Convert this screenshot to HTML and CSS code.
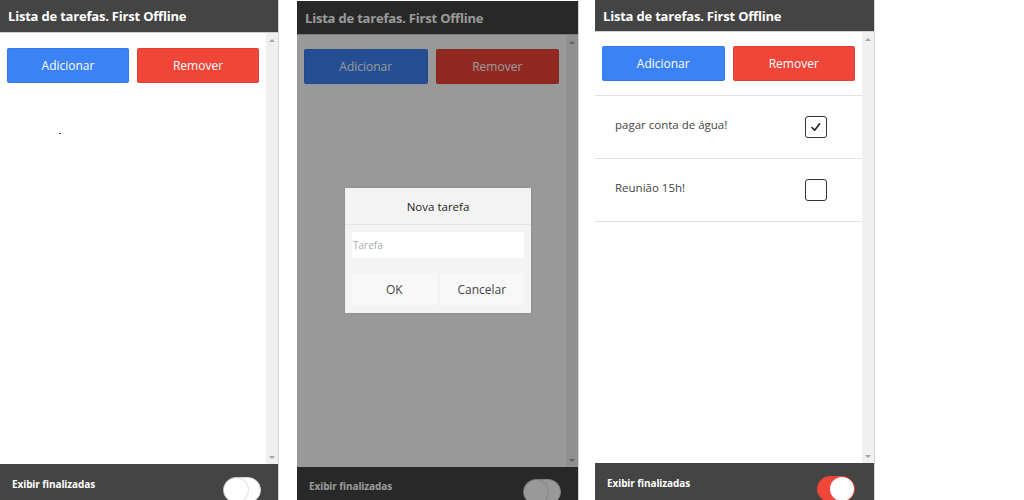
FILE: index.html
```html
<!DOCTYPE html>
<html lang="pt">
<head>
<meta charset="utf-8">
<title>Lista de tarefas</title>
<link rel="stylesheet" href="styles.css">
</head>
<body>
<div class="screens">

  <section class="phone p1">
    <header class="bar">Lista de tarefas. First Offline</header>
    <div class="main">
      <div class="content">
        <div class="actions">
          <button class="btn btn-add">Adicionar</button>
          <button class="btn btn-remove">Remover</button>
        </div>
        <div class="stray"></div>
      </div>
      <div class="scroll"><span class="arr up"></span><span class="arr down"></span></div>
    </div>
    <footer class="foot">
      <span class="foot-label">Exibir finalizadas</span>
      <span class="toggle"><span class="knob"></span></span>
    </footer>
  </section>

  <section class="phone p2">
    <header class="bar">Lista de tarefas. First Offline</header>
    <div class="main">
      <div class="content">
        <div class="actions">
          <button class="btn btn-add">Adicionar</button>
          <button class="btn btn-remove">Remover</button>
        </div>
      </div>
      <div class="scroll"><span class="arr up"></span><span class="arr down"></span></div>
    </div>
    <footer class="foot">
      <span class="foot-label">Exibir finalizadas</span>
      <span class="toggle"><span class="knob"></span></span>
    </footer>
    <div class="overlay"></div>
    <div class="dialog">
      <div class="dialog-title">Nova tarefa</div>
      <div class="dialog-body">
        <input class="dialog-input" type="text" placeholder="Tarefa">
        <div class="dialog-actions">
          <button class="dbtn">OK</button>
          <button class="dbtn">Cancelar</button>
        </div>
      </div>
    </div>
  </section>

  <section class="phone p3">
    <header class="bar">Lista de tarefas. First Offline</header>
    <div class="main">
      <div class="content">
        <div class="actions">
          <button class="btn btn-add">Adicionar</button>
          <button class="btn btn-remove">Remover</button>
        </div>
        <ul class="tasks">
          <li class="task">
            <span class="task-text">pagar conta de água!</span>
            <span class="check">
              <svg viewBox="0 0 22 22" width="20" height="20"><polyline points="6.5,11.5 9.5,14.5 15,7.5" fill="none" stroke="#222" stroke-width="1.8" stroke-linecap="round" stroke-linejoin="round"/></svg>
            </span>
          </li>
          <li class="task">
            <span class="task-text">Reunião 15h!</span>
            <span class="check"></span>
          </li>
        </ul>
      </div>
      <div class="scroll"><span class="arr up"></span><span class="arr down"></span></div>
    </div>
    <footer class="foot">
      <span class="foot-label">Exibir finalizadas</span>
      <span class="toggle on"><span class="knob"></span></span>
    </footer>
  </section>

</div>
</body>
</html>
```

FILE: styles.css
```css
* { box-sizing: border-box; }

body {
  margin: 0;
  background: #fff;
  font-family: "Open Sans", "Noto Sans", sans-serif;
}

.screens {
  display: flex;
  align-items: flex-start;
  height: 500px;
  overflow: hidden;
}

.phone {
  position: relative;
  flex: none;
  display: flex;
  flex-direction: column;
  height: 500px;
  border-right: 1px solid #d6d6d6;
  overflow: hidden;
}

.p1 { width: 279px; }
.p2 { width: 282px; margin-left: 18px; margin-top: 1px; }
.p3 { width: 280px; margin-left: 16px; }

.bar {
  flex: none;
  height: 33px;
  background: #444;
  border-bottom: 1px solid #d0d0d0;
  color: #fff;
  font-weight: 700;
  font-size: 13px;
  letter-spacing: -0.2px;
  padding-left: 8px;
  display: flex;
  align-items: center;
}
.p2 .bar { height: 34px; }
.p3 .bar { height: 32px; }

.main {
  flex: 1;
  display: flex;
  min-height: 0;
}

.content {
  flex: 1;
  min-width: 0;
}

.actions {
  display: flex;
  gap: 8px;
  padding: 15px 7px 0;
}
.p2 .actions, .p3 .actions { padding-top: 14px; }

.btn {
  flex: 1;
  height: 35px;
  border: 1px solid rgba(0,0,0,0.06);
  border-radius: 2px;
  color: #fff;
  font-family: inherit;
  font-size: 12px;
  padding: 0;
}
.btn-add { background: #3b82f6; }
.btn-remove { background: #f04539; }

.stray {
  width: 2px;
  height: 1px;
  margin: 50px 0 0 59px;
  background: #444;
}

.scroll {
  flex: none;
  width: 12px;
  background: #f0f0f0;
  display: flex;
  flex-direction: column;
  justify-content: space-between;
  align-items: center;
  padding: 6px 0 5px;
}
.arr {
  width: 0;
  height: 0;
  border-left: 3px solid transparent;
  border-right: 3px solid transparent;
}
.arr.up { border-bottom: 3px solid #a3a3a3; }
.arr.down { border-top: 3px solid #a3a3a3; }

.foot {
  flex: none;
  height: 36px;
  background: #444;
  display: flex;
  justify-content: space-between;
  align-items: flex-start;
  padding: 13px 17px 0 12px;
}
.p2 .foot { height: 34px; padding-top: 12px; }
.p3 .foot { height: 37px; padding-right: 19px; }

.foot-label {
  color: #fff;
  font-weight: 700;
  font-size: 10px;
  line-height: 14px;
  letter-spacing: -0.1px;
}

.toggle {
  position: relative;
  width: 38px;
  height: 26px;
  border-radius: 13px;
  background: #fff;
  border: 1px solid #d8d8d8;
}
.knob {
  position: absolute;
  top: 0;
  left: 0;
  width: 24px;
  height: 24px;
  border-radius: 50%;
  background: #fff;
  box-shadow: 0 0 2px rgba(0,0,0,0.35);
}
.toggle.on {
  background: #f04539;
  border-color: #f04539;
}
.toggle.on .knob {
  left: auto;
  right: 0;
  box-shadow: none;
}

.tasks {
  list-style: none;
  margin: 14px 0 0;
  padding: 0;
  border-top: 1px solid #e2e2e2;
}
.task {
  height: 63px;
  border-bottom: 1px solid #e2e2e2;
  display: flex;
  align-items: center;
  justify-content: space-between;
  padding: 0 35px 0 20px;
}
.task-text {
  font-size: 11.5px;
  color: #444;
  margin-bottom: 6px;
}
.check {
  width: 22px;
  height: 22px;
  border: 1px solid #333;
  border-radius: 3px;
  background: #fff;
  display: flex;
  align-items: center;
  justify-content: center;
}

.overlay {
  position: absolute;
  inset: 0;
  background: rgba(0,0,0,0.4);
}

.dialog {
  position: absolute;
  left: 48px;
  top: 187px;
  width: 186px;
  height: 125px;
  background: #f3f3f3;
  box-shadow: 0 0 2px rgba(0,0,0,0.15);
}
.dialog-title {
  height: 37px;
  border-bottom: 1px solid #e4e4e4;
  display: flex;
  align-items: center;
  justify-content: center;
  font-size: 11.5px;
  color: #222;
}
.dialog-body {
  padding: 7px 7px 0;
}
.dialog-input {
  display: block;
  width: 100%;
  height: 26px;
  border: none;
  background: #fff;
  padding: 0 1px;
  font-family: inherit;
  font-size: 10px;
  outline: none;
}
.dialog-input::placeholder { color: #aaa; }
.dialog-actions {
  display: flex;
  gap: 3px;
  margin-top: 15px;
}
.dbtn {
  flex: 1;
  height: 32px;
  border: none;
  background: #f8f8f8;
  font-family: inherit;
  font-size: 12px;
  color: #444;
  padding: 0;
}
```
